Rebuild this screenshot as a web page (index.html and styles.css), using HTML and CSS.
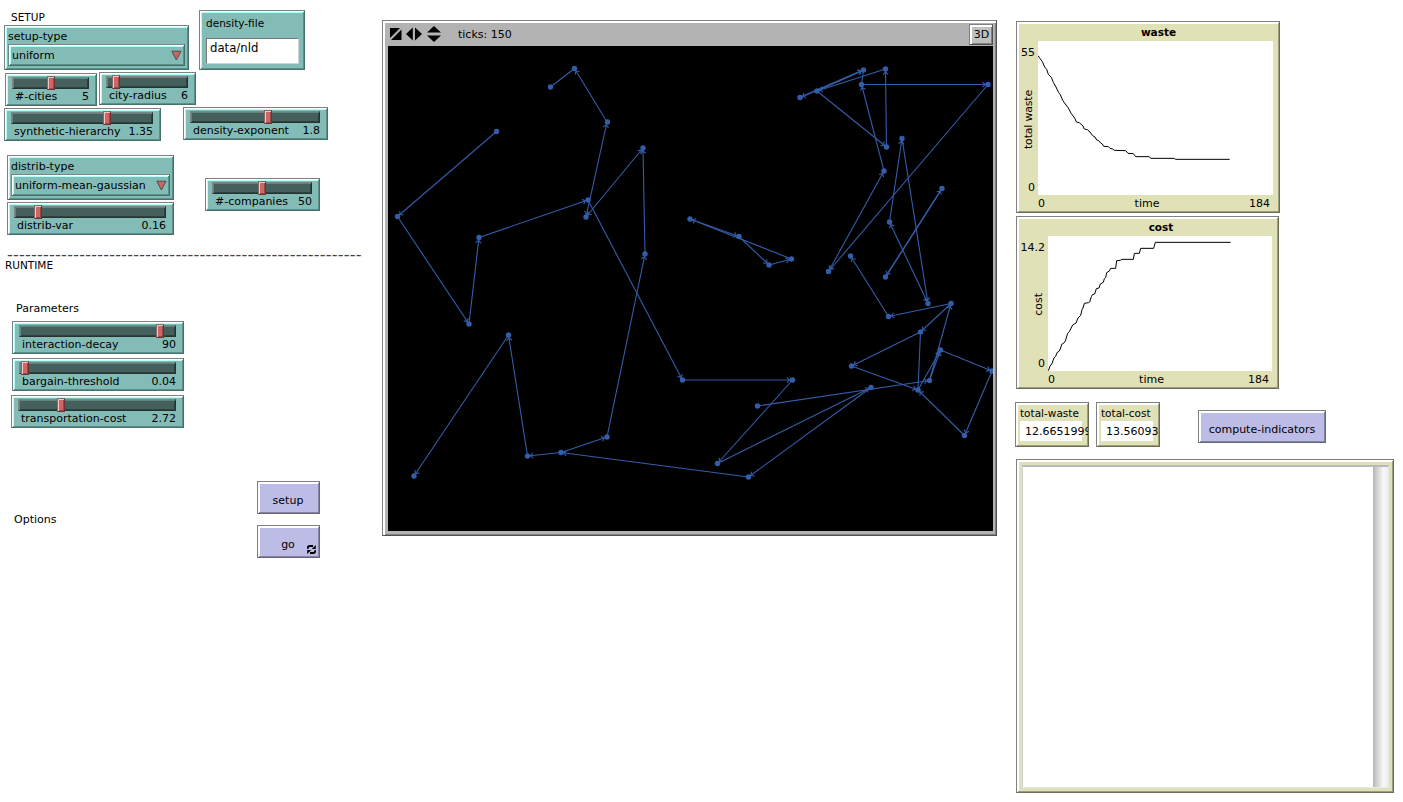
FILE: index.html
```html
<!DOCTYPE html>
<html lang="en">
<head>
<meta charset="utf-8">
<title>Model interface</title>
<link rel="stylesheet" href="styles.css">
</head>
<body>
<main class="interface">
  <section class="controls">
    <div class="row row-type">
      <div class="stack setup-stack">
        <h2 class="note note-setup">SETUP</h2>
        <div class="widget teal chooser">
          <span class="chooser-label">setup-type</span>
          <div class="chooser-value"><span>uniform</span>
            <svg class="arrow" viewBox="0 0 11 11"><path d="M.8 1.2H10L5.4 10z"/></svg></div>
        </div>
      </div>
      <div class="widget teal input-box"><span>density-file</span><div class="input-value">data/nld</div></div>
    </div>
    <div class="row row-cities">
      <div class="widget teal slider cities"><div class="track"><i class="handle" style="left:35px"></i></div><div class="caption"><span>#-cities</span><span>5</span></div></div>
      <div class="widget teal slider radius"><div class="track"><i class="handle" style="left:6px"></i></div><div class="caption"><span>city-radius</span><span>6</span></div></div>
    </div>
    <div class="row row-hierarchy">
      <div class="widget teal slider hierarchy"><div class="track"><i class="handle" style="left:92px"></i></div><div class="caption"><span>synthetic-hierarchy</span><span>1.35</span></div></div>
      <div class="widget teal slider exponent"><div class="track"><i class="handle" style="left:74px"></i></div><div class="caption"><span>density-exponent</span><span>1.8</span></div></div>
    </div>
    <div class="row row-distrib">
      <div class="stack distrib-stack">
        <div class="widget teal chooser">
          <span class="chooser-label">distrib-type</span>
          <div class="chooser-value"><span>uniform-mean-gaussian</span>
            <svg class="arrow" viewBox="0 0 11 11"><path d="M.8 1.2H10L5.4 10z"/></svg></div>
        </div>
        <div class="widget teal slider"><div class="track"><i class="handle" style="left:20px"></i></div><div class="caption"><span>distrib-var</span><span>0.16</span></div></div>
      </div>
      <div class="widget teal slider companies"><div class="track"><i class="handle" style="left:46px"></i></div><div class="caption"><span>#-companies</span><span>50</span></div></div>
    </div>
    <div class="note divider">-----------------------------------------------------------</div>
    <h2 class="note note-runtime">RUNTIME</h2>
    <h3 class="note note-params">Parameters</h3>
    <div class="stack params">
      <div class="widget teal slider"><div class="track"><i class="handle" style="left:137px"></i></div><div class="caption"><span>interaction-decay</span><span>90</span></div></div>
      <div class="widget teal slider"><div class="track"><i class="handle" style="left:2px"></i></div><div class="caption"><span>bargain-threshold</span><span>0.04</span></div></div>
      <div class="widget teal slider transport"><div class="track"><i class="handle" style="left:39px"></i></div><div class="caption"><span>transportation-cost</span><span>2.72</span></div></div>
    </div>
    <div class="row actions">
      <h3 class="note note-options">Options</h3>
      <div class="stack buttons">
        <button class="widget lilac button">setup</button>
        <button class="widget lilac button">go
          <svg class="forever" viewBox="0 0 9 9"><path d="M.9 3.8V2.7Q.9 1 2.6 1H6M8.1 5.2v1.1Q8.1 8 6.4 8H3"/><path class="tips" d="M8.8 0v4H4.8zM.2 9V5h4z"/></svg></button>
      </div>
    </div>
  </section>

  <section class="view">
    <header class="view-bar">
      <svg class="view-icons" viewBox="0 0 52 16">
        <path d="M0 2h10L0 12zM11.500 3.500v10.500H1z"/>
        <path d="M22.800 1.500V14.500L16 8zM25 1.500V14.500L32 8z"/>
        <path d="M44 0l7 6.500H37zM44 16l7-6.500H37z"/>
      </svg>
      <span class="ticks">ticks: 150</span>
      <button class="three-d">3D</button>
    </header>
    <svg class="world" viewBox="388 46 605 485">
      <defs>
        <marker id="tip" markerUnits="userSpaceOnUse" markerWidth="12" markerHeight="10" refX="10" refY="5" orient="auto-start-reverse"><path d="M4.500 2.300L7 5L4.500 7.700"/></marker>
      </defs>
      <g class="links" marker-end="url(#tip)">
        <path d="M607 122L574.500 68.500"/><path d="M496.500 131.500L397.500 216.500"/>
        <path d="M397.500 216.500L469 324"/><path d="M469 324L479 237.500"/><path d="M479 237.500L588 200"/>
        <path d="M588 200L682.500 380"/><path d="M682.500 380H792.500"/><path d="M792.500 380L717.500 463.500"/>
        <path d="M717.500 463.500L871 387.500"/><path d="M871 387.500L748.500 477"/><path d="M748.500 477L561 452.500"/>
        <path d="M561 452.500L607 437"/><path d="M561 452.500L527.500 456"/><path d="M607 437L645 254"/>
        <path d="M645 254L643 148"/><path d="M527.500 456L508.500 335"/><path d="M508.500 335L414 476"/>
        <path d="M757.500 406L929.500 380.500"/><path d="M929.500 380.500L940.500 350"/><path d="M918 390L940.500 350"/>
        <path d="M929.500 380.500L951 303.500"/><path d="M940.500 350L992 371"/><path d="M992 371L964.500 435.500"/>
        <path d="M964.500 435.500L918 390"/><path d="M851.500 366L918 390"/><path d="M920.500 332L851.500 366"/>
        <path d="M951 303.500L920.500 332"/><path d="M951 303.500L888.500 316.500"/><path d="M888.500 316.500L850.500 256"/>
        <path d="M889.500 222L902 138.500"/><path d="M902 138.500L928 303.500"/><path d="M884 171L861.500 84.500"/>
        <path d="M861.500 84.500H988"/><path d="M988 84.500L828.500 271.500"/><path d="M817 91L863.500 70"/>
        <path d="M885.500 69L817 91"/><path d="M817 91L886.500 147"/><path d="M886.500 147L885.500 69"/>
        <path d="M690 219L739 236.500"/><path d="M739 236.500L769 265"/><path d="M769 265L791.500 259"/><path d="M791.500 259L690 219"/>
      </g>
      <g class="links" marker-start="url(#tip)" marker-end="url(#tip)">
        <path d="M607 122L586 217"/><path d="M643 148L586 217"/><path d="M889.500 222L928 303.500"/>
        <path class="strong" d="M942 188.500L885.500 277"/><path d="M828.500 271.500L884 171"/><path class="strong" d="M800 97.500L863.500 70"/>
      </g>
      <g class="links"><path d="M550.500 87L574.500 68.500M920.500 332L918 390M861.500 84.500L863.500 70"/></g>
      <path class="nodes" d="M550.500 87h0M574.500 68.500h0M607.500 122h0M586 217h0M588 200h0M643 148h0M645 254h0M607 437h0M561 452.500h0M527.500 456h0M508.500 335h0M414 476h0M496.500 131.500h0M397.500 216.500h0M469 324h0M479 237.500h0M682.500 380h0M792.500 380h0M717.500 463.500h0M871 387.500h0M748.500 477h0M757.500 406h0M929.500 380.500h0M940.500 350h0M992 371h0M964.500 435.500h0M918 390h0M851.500 366h0M920.500 332h0M951 303.500h0M888.500 316.500h0M850.500 256h0M902 138.500h0M889.500 222h0M928 303.500h0M942 188.500h0M885.500 277h0M828.500 271.500h0M884 171h0M861.500 84.500h0M988 84.500h0M863.500 70h0M800 97.500h0M817 91h0M885.500 69h0M886.500 147h0M690 219h0M739 236.500h0M769 265h0M791.500 259h0"/>
    </svg>
  </section>

  <section class="results">
    <figure class="widget khaki plot plot-waste">
      <figcaption>waste</figcaption>
      <div class="y-axis"><span>55</span><span class="y-name">total waste</span><span>0</span></div>
      <svg class="canvas" viewBox="84 78 705 462"><polyline points="84,122 90,130 97,140 104,156 110,163 115,178 124,187 130,202 138,216 146,233 151,239 158,256 168,270 175,279 184,296 194,309 199,321 208,323 219,333 223,342 232,344 240,351 248,362 255,366 260,375 266,377 272,384 277,387 281,394 295,395 300,400 308,402 313,406 347,407 354,415 370,416 377,425 418,425 422,430 494,430 496,433 659,433"/></svg>
      <div class="x-axis"><span>0</span><span>time</span><span>184</span></div>
    </figure>
    <figure class="widget khaki plot plot-cost">
      <figcaption>cost</figcaption>
      <div class="y-axis"><span>14.2</span><span class="y-name">cost</span><span>0</span></div>
      <svg class="canvas" viewBox="114 72 672 405"><polyline points="115,476 120,463 126,454 132,438 137,433 141,422 147,418 151,411 155,397 163,392 167,384 173,364 178,359 182,351 188,339 198,333 204,318 212,310 216,293 219,288 223,274 236,272 239,270 244,254 247,248 254,246 259,230 267,228 271,216 280,211 283,200 287,197 290,182 298,177 302,169 317,169 320,146 332,145 334,142 370,142 373,124 388,124 392,109 431,109 436,91 662,91"/></svg>
      <div class="x-axis"><span>0</span><span>time</span><span>184</span></div>
    </figure>
    <div class="row readouts">
      <div class="widget khaki monitor monitor-waste"><span>total-waste</span><output>12.6651999</output></div>
      <div class="widget khaki monitor monitor-cost"><span>total-cost</span><output>13.56093</output></div>
      <button class="widget lilac button compute">compute-indicators</button>
    </div>
    <div class="widget khaki log"><div class="log-area"><div class="scrollbar"></div></div></div>
  </section>
</main>
</body>
</html>
```

FILE: styles.css
```css
* { box-sizing: border-box; }
body { margin: 0; background: #fff; color: #000; font: 11px/14px "DejaVu Sans", sans-serif; overflow: hidden; }
h2, h3, figure { margin: 0; font: inherit; }
.interface { display: flex; align-items: flex-start; width: 1403px; height: 802px; }
.row { display: flex; align-items: flex-start; }
.stack { display: flex; flex-direction: column; }
.note { white-space: nowrap; height: 14px; }

/* Raised bevel shared by every widget */
.widget {
  --light: #fff; --mid: #808080; --dark: #505050;
  border: 1px solid; border-color: #808080 var(--dark) var(--dark) #808080;
  box-shadow: inset 1px 1px #fff, inset -1px -1px var(--mid), inset 2px 2px var(--light);
  flex: none; color: inherit;
}
.teal { --light: #b4fffa; --mid: #599089; --dark: #47706b; background: #83bcb6; }
.lilac { --light: #fff; --mid: #8483a2; --dark: #66657e; background: #bcbce6; }
.khaki { --light: #fff; --mid: #9c9d7f; --dark: #6c6d58; background: #e0e1b6; }

/* Left column */
.controls { width: 382px; padding-top: 10px; flex: none; }
.setup-stack { width: 185px; margin-left: 4px; }
.note-setup { height: 15px; padding-left: 7px; font-size: 10.5px; }
.chooser { height: 45px; padding: 4px 3px 3px; }
.chooser-label { display: block; height: 14px; }
.chooser-value {
  display: flex; justify-content: space-between; align-items: center;
  height: 22px; padding: 1px 2px 0 3px;
  border: 1px solid; border-color: #7b8583 #47706b #47706b #7b8583;
  box-shadow: inset 1px 1px #fff, inset -1px -1px #599089, inset 2px 2px #b4fffa;
}
.arrow { width: 11px; height: 11px; fill: #d06464; stroke: #47504f; stroke-width: 1; }
.input-box { width: 106px; height: 60px; margin-left: 10px; padding: 5px 5px 4px 6px; }
.input-box > span { display: block; height: 14px; font-size: 10.5px; }
.input-value { width: 93px; height: 26px; margin-top: 8px; padding: 2px 3px; background: #fff; border: 1px solid; border-color: #777 #c9d8d6 #c9d8d6 #777; font-size: 11.7px; }
.slider { height: 33px; padding: 3px 7px 0 6px; }
.track { position: relative; height: 12px; background: #45605c; border: 1px solid; border-color: #7d8583 #233431 #233431 #7d8583; box-shadow: inset 1px 1px #5f8580, inset -1px -1px #2c423f; }
.handle { position: absolute; top: -2px; margin-left: -1px; width: 8px; height: 14px; background: #cf6666; border: 1px solid; border-color: #806c6c #6b3434 #6b3434 #806c6c; box-shadow: inset 1px 1px #ffc0c0, inset -1px -1px #984848; }
.caption { display: flex; justify-content: space-between; margin: 1px 0 0 3px; white-space: nowrap; }
.row-cities { margin-top: 2px; padding-left: 5px; gap: 2px; }
.cities { width: 92px; margin-top: 1px; }
.radius { width: 97px; }
.row-hierarchy { margin-top: 1px; padding-left: 4px; gap: 22px; }
.hierarchy { width: 157px; margin-top: 1px; }
.exponent { width: 145px; }
.row-distrib { margin-top: 14px; padding-left: 7px; gap: 31px; }
.distrib-stack { width: 167px; gap: 2px; }
.companies { width: 115px; margin-top: 23px; }
.divider { width: 358px; margin: 13px 0 0 7px; height: 10px; font-size: 16px; line-height: 13px; letter-spacing: .24px; color: #444; }
.note-runtime { padding-left: 5px; font-size: 10.5px; }
.note-params { margin-top: 30px; padding-left: 16px; }
.params { margin-top: 5px; gap: 4px; padding-left: 12px; width: 184px; }
.transport { margin-left: -1px; }
.actions { margin-top: 53px; }
.note-options { width: 257px; padding-left: 14px; margin-top: 32px; }
.buttons { width: 63px; gap: 11px; }
.button { position: relative; height: 33px; padding: 7px 1px 0 0; font: inherit; text-align: center; white-space: nowrap; border-radius: 0; }
.forever { position: absolute; right: 3px; bottom: 3px; width: 9px; height: 9px; fill: none; stroke: #000; stroke-width: 1.8; }
.forever .tips { fill: #000; stroke: none; }

/* World view */
.view {
  width: 615px; height: 516px; margin-top: 20px; padding: 2px 3px 4px 5px; flex: none; background: #b3b3b3;
  border: 1px solid; border-color: #808080 #505050 #505050 #808080;
  box-shadow: inset 2px 2px #fff, inset -1px -1px #808080;
}
.view-bar { display: flex; align-items: center; height: 23px; }
.view-icons { width: 52px; height: 16px; margin: -1px 0 0 2px; }
.ticks { margin-left: 16px; }
.three-d { width: 24px; height: 21px; margin-left: auto; padding: 1px 0 0 1px; font: inherit; color: inherit; background: #c0c0c0; border: 1px solid; border-color: #808080 #505050 #505050 #808080; box-shadow: inset 2px 2px #fff, inset -1px -1px #808080; }
.world { display: block; width: 605px; height: 485px; background: #000; }
.world path { fill: none; stroke: #345da9; stroke-width: 1.1; }
.world .strong { stroke-width: 1.5; }
.world .nodes { stroke-width: 5.4; stroke-linecap: round; }

/* Plots and readouts */
.results { margin: 21px 0 0 18px; width: 380px; flex: none; }
.plot { display: grid; grid-template-rows: 19px 1fr 17px; }
.plot figcaption { grid-column: 1 / 3; text-align: center; font-weight: bold; font-size: 10.5px; padding: 3px 0 0 27px; }
.plot-waste { width: 264px; height: 192px; margin-left: 1px; grid-template-columns: 21px 235px; }
.plot-cost { width: 263px; height: 173px; margin: 3px 0 0 1px; grid-template-columns: 31px 224px; }
.y-axis { display: flex; flex-direction: column; justify-content: space-between; align-items: flex-end; padding: 5px 3px 0 0; }
.y-name { writing-mode: vertical-rl; transform: rotate(180deg); white-space: nowrap; line-height: 11px; margin: -3px 1px 0 0; }
.plot-waste .y-name { letter-spacing: -.2px; }
.canvas { width: 100%; height: 100%; background: #fff; }
.canvas polyline { fill: none; stroke: #000; stroke-width: 1; vector-effect: non-scaling-stroke; }
.x-axis { grid-column: 2; display: flex; justify-content: space-between; padding: 2px 3px 0 0; }
.plot-cost figcaption { padding-left: 33px; }
.readouts { margin-top: 13px; }
.monitor { height: 45px; padding: 3px 0 0 4px; white-space: nowrap; overflow: hidden; }
.monitor > span { display: block; height: 15px; font-size: 10.5px; }
.monitor output { display: block; height: 20px; padding: 4px 0 0 5px; background: #fff; }
.monitor-waste { width: 74px; }
.monitor-waste output { width: 62px; }
.monitor-cost { width: 64px; margin-left: 7px; }
.monitor-cost output { width: 52px; }
.compute { width: 128px; margin: 8px 0 0 38px; padding-left: 1px; }
.log { width: 378px; height: 334px; margin: 12px 0 0 1px; padding: 5px 4px 4px 5px; }
.log-area { height: 100%; display: flex; justify-content: flex-end; background: #fff; border: 1px solid #e8e8e8; border-top: 2px solid #b8b8bd; border-left-color: #d0d0d0; }
.scrollbar { width: 15px; background: linear-gradient(90deg, #b4b4b4, #d8d8d8 35%, #f8f8f8 70%, #eee); }
```
